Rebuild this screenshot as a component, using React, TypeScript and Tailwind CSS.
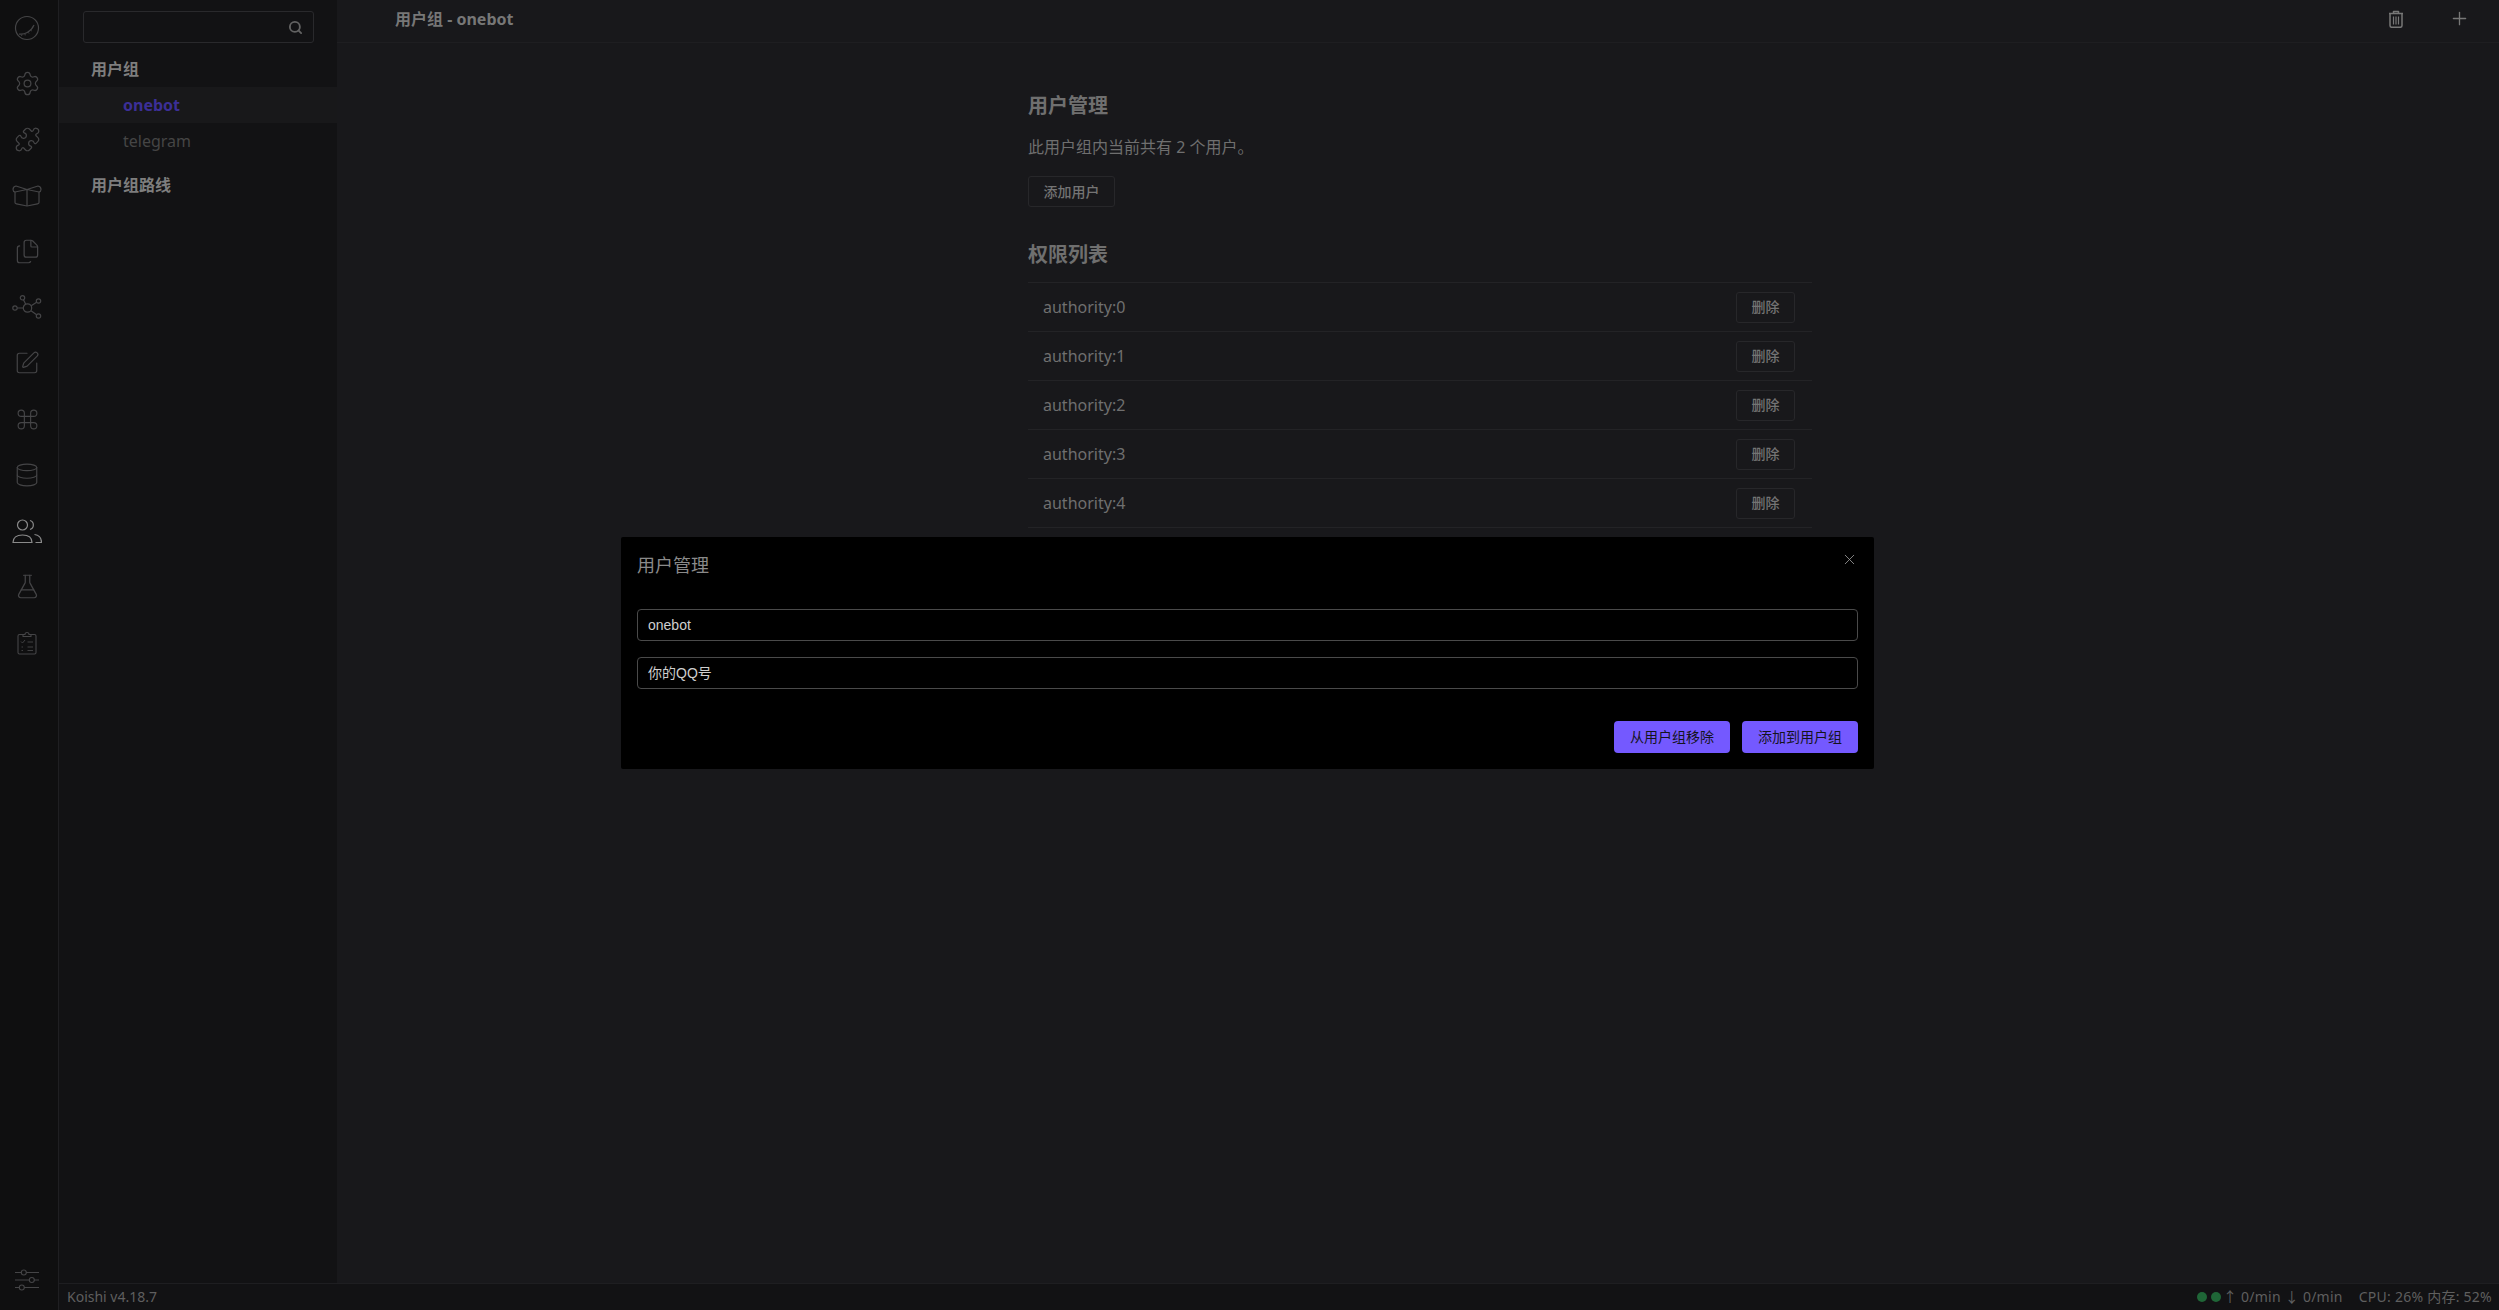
import {
  Command,
  Database,
  Files,
  FlaskConical,
  Plus,
  Puzzle,
  Search,
  Settings,
  SquarePen,
  X,
} from 'lucide-react'
import type { ReactNode } from 'react'

const FONT = "font-['Noto_Sans','Noto_Sans_CJK_SC',sans-serif]"
const DIALOG_FONT = "font-['Liberation_Sans','Noto_Sans_CJK_SC',sans-serif]"

function KoishiLogo() {
  return (
    <svg viewBox="0 0 26 26" className="h-[26px] w-[26px]" fill="none" stroke="currentColor" strokeWidth="1.2">
      <circle cx="13" cy="13" r="11.5" />
      <path d="M5 19c5 1 12-2 15-9" />
      <path d="M8 19.5l-.5 1.5M11 18.8l.2 1.6M14 17.2l1 1.3M16.5 15l1.3 1" strokeWidth="0.9" />
    </svg>
  )
}

function BoxIcon() {
  return (
    <svg viewBox="0 0 30 22" className="h-[22px] w-[30px]" fill="none" stroke="currentColor" strokeWidth="1.2" strokeLinejoin="round">
      <path d="M15 4.500 L4 1 Q1 1.500 1 4.500 Q1 6.500 3 7 L15 4.500 L27 7 Q29 6.500 29 4.500 Q29 1.500 26 1 Z" />
      <path d="M3 7 V17.500 Q3 18.500 4.500 18.800 L15 21 L25.500 18.800 Q27 18.500 27 17.500 V7" />
      <path d="M15 4.500 V21" />
    </svg>
  )
}

function HubIcon() {
  return (
    <svg viewBox="0 0 30 24" className="h-[24px] w-[30px]" fill="none" stroke="currentColor" strokeWidth="1.2">
      <circle cx="15.500" cy="13" r="4.200" />
      <circle cx="10.500" cy="2.800" r="2.200" />
      <circle cx="26.500" cy="6" r="2.200" />
      <circle cx="26.500" cy="21" r="2.200" />
      <circle cx="3" cy="13" r="2.200" />
      <path d="M5.200 13h6.100M11.500 4.800l2.200 4.400M24.600 7.200l-5.400 3.600M24.600 19.800l-5.600-4" />
    </svg>
  )
}

function UsersIcon() {
  return (
    <svg viewBox="0 0 30 24" className="h-[24px] w-[30px]" fill="none" stroke="currentColor" strokeWidth="1.2">
      <circle cx="10.500" cy="6" r="5" />
      <path d="M1 23.500c0-5 3.500-7.500 9.500-7.500s9.500 2.500 9.500 7.500z" />
      <path d="M18 1.500a4.700 4.700 0 0 1 0 9" />
      <path d="M22.500 15.500c4 .5 7 3 7 8h-6" />
    </svg>
  )
}

function ChecklistIcon() {
  return (
    <svg viewBox="0 0 20 24" className="h-[24px] w-[20px]" fill="none" stroke="currentColor" strokeWidth="1.1" strokeLinejoin="round">
      <path d="M6 3.500H2.500Q1 3.500 1 5v16.500Q1 23 2.500 23h15q1.500 0 1.500-1.500V5q0-1.500-1.500-1.500H14" />
      <path d="M6 5.500V3.500h2a2 2 0 0 1 4 0h2v2z" />
      <path d="M4 10.500l1.500 1.500 2.500-3M10.500 11H16M4.500 16h1.500M10.500 16H16M4.500 19.500h1.500M10.500 19.500H16" strokeWidth="0.9" />
    </svg>
  )
}

function SlidersIcon() {
  return (
    <svg viewBox="0 0 24 22" className="h-[22px] w-[24px]" fill="none" stroke="currentColor" strokeWidth="1.1">
      <path d="M0 3.500h6.500M11 3.500h13M0 11h14.500M19 11h5M0 18.500h4.500M9 18.500h15" />
      <circle cx="8.800" cy="3.500" r="2.500" />
      <circle cx="16.800" cy="11" r="2.500" />
      <circle cx="6.800" cy="18.500" r="2.500" />
    </svg>
  )
}

function TrashIcon() {
  return (
    <svg viewBox="0 0 16 18" className="h-[18px] w-[16px]" fill="none" stroke="currentColor" strokeWidth="1.500" strokeLinejoin="round">
      <path d="M1 3.500h14M5.500 3.500V1.500h5v2" />
      <path d="M2 3.500v12q0 1.800 1.800 1.800h8.400q1.800 0 1.800-1.800v-12" />
      <path d="M5.500 6.500v8M8 6.500v8M10.500 6.500v8" strokeWidth="1.200" />
    </svg>
  )
}

const ACTIVITY: { icon: ReactNode; active?: boolean }[] = [
  { icon: <KoishiLogo /> },
  { icon: <Settings size={27} strokeWidth={1.1} /> },
  { icon: <Puzzle size={27} strokeWidth={1.1} /> },
  { icon: <BoxIcon /> },
  { icon: <Files size={27} strokeWidth={1.1} /> },
  { icon: <HubIcon /> },
  { icon: <SquarePen size={26} strokeWidth={1.1} /> },
  { icon: <Command size={25} strokeWidth={1.1} /> },
  { icon: <Database size={26} strokeWidth={1.1} /> },
  { icon: <UsersIcon />, active: true },
  { icon: <FlaskConical size={27} strokeWidth={1.1} /> },
  { icon: <ChecklistIcon /> },
]

const AUTHORITIES = ['authority:0', 'authority:1', 'authority:2', 'authority:3', 'authority:4']

function OutlineButton({ label, className = '' }: { label: string; className?: string }) {
  return (
    <button className={`h-[31px] rounded-[3px] border border-[#27272a] text-sm font-medium text-[#747474] ${className}`}>
      {label}
    </button>
  )
}

function ActivityBar() {
  return (
    <aside className="flex w-[59px] shrink-0 flex-col border-r border-[#1f1f22] bg-[#0f0f10] pb-[3px] pr-[4px]">
      <nav className="flex flex-col">
        {ACTIVITY.map((item, index) => (
          <div
            key={index}
            className={`flex h-[55.9px] items-center justify-center ${item.active ? 'text-[#8a8a8a]' : 'text-[#454547]'}`}
          >
            {item.icon}
          </div>
        ))}
      </nav>
      <div className="mt-auto flex h-[55px] items-center justify-center text-[#454547]">
        <SlidersIcon />
      </div>
    </aside>
  )
}

function Sidebar() {
  return (
    <aside className="flex w-[278px] shrink-0 flex-col bg-[#121214] pt-[11px] text-base">
      <div className="ml-[24px] flex h-[32px] w-[231px] items-center justify-end rounded-[3px] border border-[#29292c] pr-[10px] text-[#626262]">
        <Search size={15} strokeWidth={3} />
      </div>
      <div className="mt-[8px] flex h-[36px] items-center pl-[32px] font-bold text-[#7e7e7e]">用户组</div>
      <div className="flex h-[36px] items-center bg-[#18181a] pl-[64px] font-bold text-[#3c2f97]">onebot</div>
      <div className="flex h-[36px] items-center pl-[64px] text-[#454545]">telegram</div>
      <div className="mt-[8px] flex h-[36px] items-center pl-[32px] font-bold text-[#7e7e7e]">用户组路线</div>
    </aside>
  )
}

function MainPanel() {
  return (
    <main className="flex min-w-0 flex-1 flex-col bg-[#18181b]">
      <header className="flex h-[43px] shrink-0 items-center border-b border-[#1e1e21] pb-[5px] pl-[58px] pr-[29px] text-[#777777]">
        <span className="text-base font-bold">用户组 - onebot</span>
        <span className="ml-auto mr-[45px]">
          <TrashIcon />
        </span>
        <Plus size={21} strokeWidth={1.5} />
      </header>
      <section className="ml-[691px] w-[784px]">
        <h2 className="mt-[49px] text-xl font-bold leading-7 text-[#6f6f6f]">用户管理</h2>
        <p className="mt-[15px] text-base leading-6 text-[#6f6f6f]">此用户组内当前共有 2 个用户。</p>
        <OutlineButton label="添加用户" className="mt-[17px] block w-[87px]" />
        <h2 className="mt-[34px] text-xl font-bold leading-7 text-[#6f6f6f]">权限列表</h2>
        <ul className="mt-[13px] border-t border-[#232326]">
          {AUTHORITIES.map((name) => (
            <li key={name} className="flex h-[49px] items-center justify-between border-b border-[#232326] pl-[15px] pr-[17px]">
              <span className="text-base text-[#6f6f6f]">{name}</span>
              <OutlineButton label="删除" className="w-[59px]" />
            </li>
          ))}
        </ul>
      </section>
    </main>
  )
}

function StatusBar() {
  return (
    <footer className="flex h-[27px] shrink-0 items-center justify-between border-t border-[#1e1e21] bg-[#121214] pl-[8px] pr-[7px] text-sm text-[#5f5f5f]">
      <span>Koishi v4.18.7</span>
      <div className="flex items-center tracking-[0.25px]">
        <span className="h-[10px] w-[10px] rounded-full bg-[#1f6637]" />
        <span className="ml-[4px] h-[10px] w-[10px] rounded-full bg-[#1f6637]" />
        <span className="ml-[2px]">↑ 0/min ↓ 0/min</span>
        <span className="ml-[16px]">CPU: 26% 内存: 52%</span>
      </div>
    </footer>
  )
}

function UserDialog() {
  return (
    <div className={`absolute left-[621px] top-[537px] flex h-[232px] w-[1253px] flex-col rounded-[2px] bg-black px-[16px] ${DIALOG_FONT}`}>
      <h3 className="mt-[17px] text-lg leading-6 text-[#8a8a8a]">用户管理</h3>
      <X size={17} strokeWidth={1.2} className="absolute right-[16px] top-[14px] text-[#9a9a9a]" />
      <div className="mt-[31px] flex h-[32px] items-center rounded-[4px] border border-[#4a4a4a] px-[10px] text-sm text-[#cfcfcf]">
        onebot
      </div>
      <div className="mt-[16px] flex h-[32px] items-center rounded-[4px] border border-[#4a4a4a] px-[10px] text-sm text-[#cfcfcf]">
        你的QQ号
      </div>
      <div className="mt-[32px] flex justify-end gap-[12px]">
        <button className="h-[32px] w-[116px] rounded-[4px] bg-[#7459ff] text-sm text-[#14141c]">从用户组移除</button>
        <button className="h-[32px] w-[116px] rounded-[4px] bg-[#7459ff] text-sm text-[#14141c]">添加到用户组</button>
      </div>
    </div>
  )
}

export default function App() {
  return (
    <div className={`relative flex h-[1310px] w-[2499px] overflow-hidden ${FONT}`}>
      <ActivityBar />
      <div className="flex min-w-0 flex-1 flex-col">
        <div className="flex min-h-0 flex-1">
          <Sidebar />
          <MainPanel />
        </div>
        <StatusBar />
      </div>
      <UserDialog />
    </div>
  )
}
